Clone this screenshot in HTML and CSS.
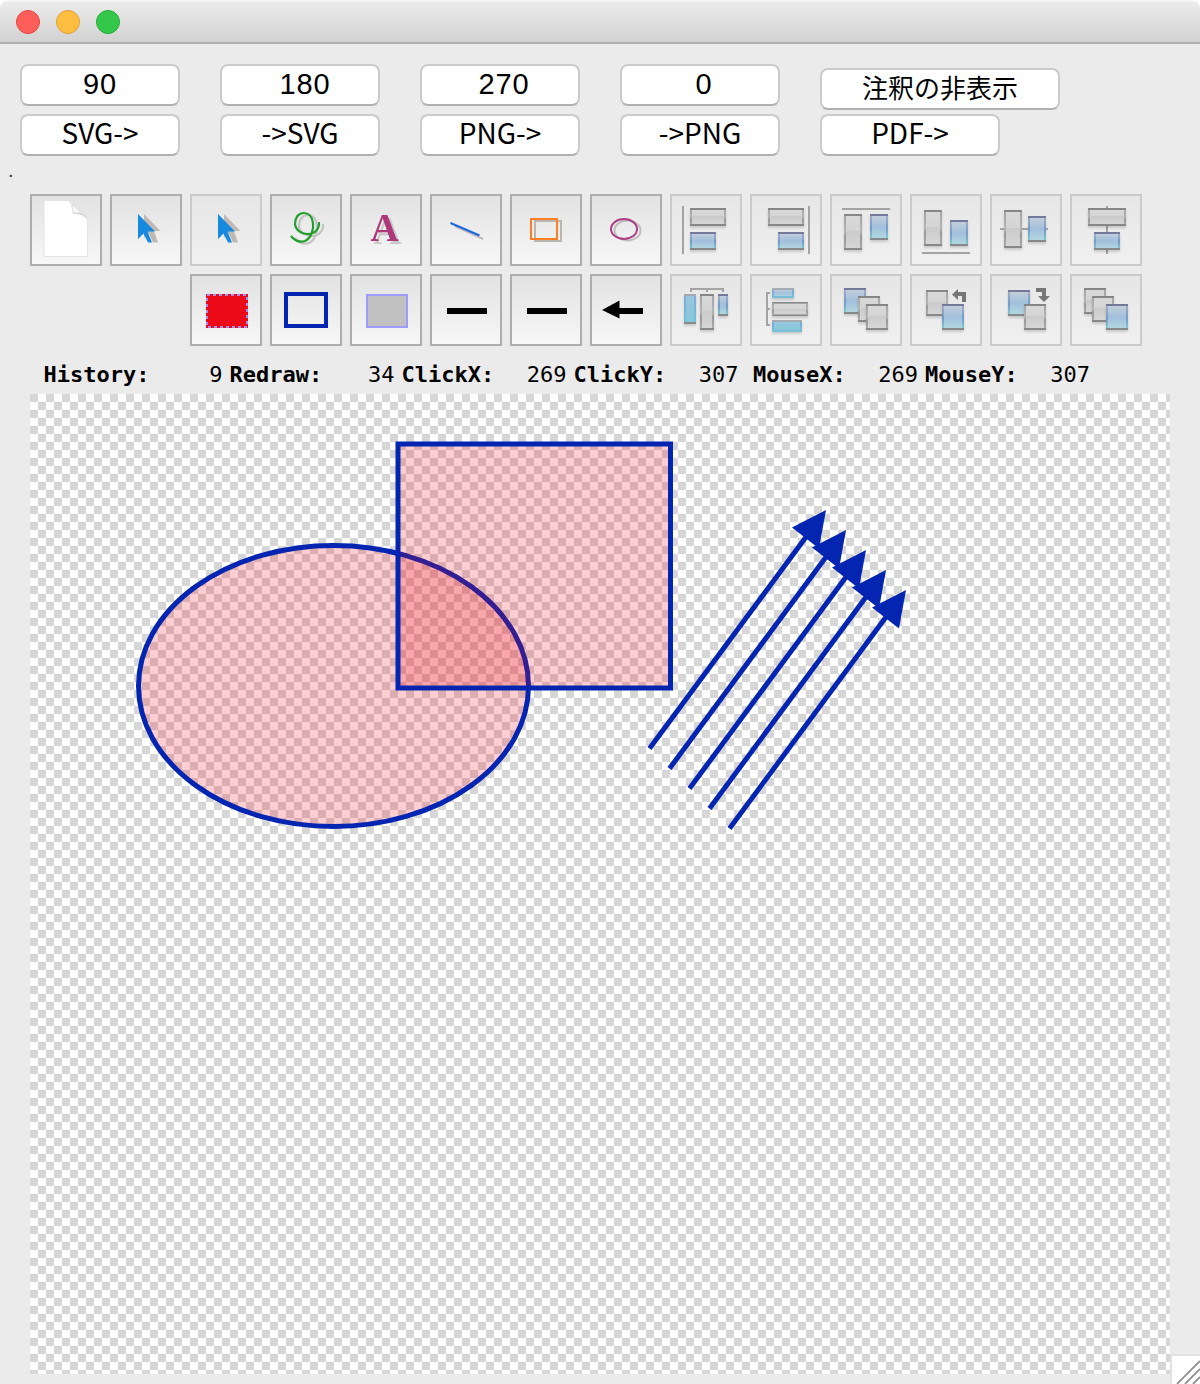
FILE: index.html
```html
<!DOCTYPE html>
<html lang="ja">
<head>
<meta charset="utf-8">
<title>SVG</title>
<link rel="stylesheet" href="styles.css">
</head>
<body>
<svg class="defs" width="0" height="0" aria-hidden="true">
  <defs>
    <linearGradient id="gf" x1="0" y1="0" x2="0" y2="1"><stop offset="0" stop-color="#d9d9d9"/><stop offset=".46" stop-color="#d4d4d4"/><stop offset=".46" stop-color="#cacaca"/><stop offset="1" stop-color="#d7d7d7"/></linearGradient>
    <linearGradient id="gs" x1="0" y1="0" x2="0" y2="1"><stop offset=".035" stop-color="#868686"/><stop offset=".035" stop-color="#a6a6a6"/><stop offset=".5" stop-color="#b4b4b4"/><stop offset=".65" stop-color="#989898"/><stop offset=".96" stop-color="#aaa"/><stop offset=".96" stop-color="#888"/></linearGradient>
    <linearGradient id="bf" x1="0" y1="0" x2="0" y2="1"><stop offset="0" stop-color="#c7cfdc"/><stop offset=".5" stop-color="#a0bfdc"/><stop offset="1" stop-color="#b4d9e0"/></linearGradient>
    <linearGradient id="bs" x1="0" y1="0" x2="0" y2="1"><stop offset=".05" stop-color="#74799a"/><stop offset=".05" stop-color="#a2adc4"/><stop offset=".55" stop-color="#739bc9"/><stop offset=".94" stop-color="#80c5cf"/><stop offset=".94" stop-color="#858989"/></linearGradient>
    <linearGradient id="cf" x1="0" y1="0" x2="0" y2="1"><stop offset="0" stop-color="#9bc7df"/><stop offset="1" stop-color="#83c7d9"/></linearGradient>
    <linearGradient id="cs" x1="0" y1="0" x2="0" y2="1"><stop offset=".05" stop-color="#a3a9ad"/><stop offset=".05" stop-color="#7aaeda"/><stop offset=".96" stop-color="#70c0d8"/><stop offset=".96" stop-color="#868a8b"/></linearGradient>
    <linearGradient id="ss" x1="0" y1="0" x2="0" y2="1"><stop offset=".1" stop-color="#a3abb0"/><stop offset=".1" stop-color="#7fa9d4"/><stop offset="1" stop-color="#77bfd9"/></linearGradient>
  </defs>
</svg>
<div class="window">
  <header class="titlebar"><i class="light red"></i><i class="light yellow"></i><i class="light green"></i></header>

  <div class="commands">
    <div class="cmd num">90</div><div class="cmd num push-10">180</div><div class="cmd num push-8">270</div><div class="cmd num push-8">0</div><div class="cmd wide">注釈の非表示</div>
    <div class="cmd">SVG-&gt;</div><div class="cmd">-&gt;SVG</div><div class="cmd">PNG-&gt;</div><div class="cmd">-&gt;PNG</div><div class="cmd medium">PDF-&gt;</div>
  </div>
  <div class="dot">.</div>

  <div class="tools">
    <div class="tool"><svg viewBox="2 2 68 68"><path d="M14 6.500H37C43 7 41 12 43 19C49 20 57 21 57.500 27V62.500H14z" fill="#fff" stroke="#e4e4e4"/><path d="M38 7C44 7 50 14 57 24C52 19 47 20 43 19C42 14 43 10 38 7z" fill="#e4e4e4"/><path d="M43 12l6 6-5 1z" fill="#fff"/><path d="M43 19C49 19 54 20 57 24" fill="none" stroke="#d0d0d0"/></svg></div>
    <div class="tool"><svg viewBox="2 2 68 68"><path class="cshadow" d="M34 20L50.500 37H44L48 48.500H43L38.500 39L34 44z"/><path class="cursor" d="M28 20L45 37.500H37.500L42 48.500H38L33.500 39.500L28 45z"/></svg></div>
    <div class="tool off"><svg viewBox="2 2 68 68"><path class="cshadow" d="M34 20L50.500 37H44L48 48.500H43L38.500 39L34 44z"/><path class="cursor" d="M28 20L45 37.500H37.500L42 48.500H38L33.500 39.500L28 45z"/></svg></div>
    <div class="tool"><svg viewBox="2 2 68 68" fill="none" stroke-width="2.200"><path transform="translate(4 2)" stroke="#c3c3c3" d="M21 42C25 47 30 48.500 35 47C41 44 44 36 43 29C42 22 38 19 34 19C28 19 25 24 25 30C26 37 32 40 38 40C45 40 49.500 35 49 28"/><path stroke="#20a02a" d="M21 42C25 47 30 48.500 35 47C41 44 44 36 43 29C42 22 38 19 34 19C28 19 25 24 25 30C26 37 32 40 38 40C45 40 49.500 35 49 28"/></svg></div>
    <div class="tool"><svg viewBox="2 2 68 68"><text class="letter" x="34.500" y="46.500">A</text></svg></div>
    <div class="tool"><svg viewBox="2 2 68 68" stroke-width="2.200"><path stroke="#c3bdb9" d="M25 32L53 45"/><path stroke="#1d68de" d="M20.500 29L49.500 41.500"/></svg></div>
    <div class="tool"><svg viewBox="2 2 68 68" fill="none" stroke-width="2"><rect x="25" y="27" width="26" height="20" stroke="#b9b5b1"/><rect x="21" y="25" width="26" height="20" stroke="#ff7f27"/></svg></div>
    <div class="tool"><svg viewBox="2 2 68 68" fill="none" stroke-width="2"><ellipse cx="37.500" cy="36.500" rx="13" ry="10" stroke="#c0bdbd"/><ellipse cx="34" cy="35" rx="13" ry="10" stroke="#ac3f83"/></svg></div>
    <div class="tool off"><svg viewBox="2 2 68 68"><path class="guide" d="M13 12V60"/><rect class="g" x="21" y="15" width="34" height="16"/><rect class="b" x="21" y="39" width="24" height="16"/></svg></div>
    <div class="tool off"><svg viewBox="2 2 68 68"><path class="guide" d="M59 12V60"/><rect class="g" x="19" y="15" width="34" height="16"/><rect class="b" x="29" y="39" width="24" height="16"/></svg></div>
    <div class="tool off"><svg viewBox="2 2 68 68"><path class="guide" d="M12 15H60"/><rect class="g" x="15" y="21" width="16" height="34"/><rect class="b" x="41" y="21" width="16" height="24"/></svg></div>
    <div class="tool off"><svg viewBox="2 2 68 68"><path class="guide" d="M12 59H60"/><rect class="g" x="15" y="17" width="16" height="34"/><rect class="b" x="41" y="27" width="16" height="24"/></svg></div>
    <div class="tool off"><svg viewBox="2 2 68 68"><path class="guide" d="M10 35H58"/><rect class="g" x="15" y="17" width="16" height="36"/><rect class="b" x="39" y="23" width="16" height="24"/></svg></div>
    <div class="tool off"><svg viewBox="2 2 68 68"><path class="guide" d="M37 12V60"/><rect class="g" x="19" y="15" width="36" height="16"/><rect class="b" x="25" y="39" width="24" height="16"/></svg></div>

    <div class="tool third"><svg viewBox="2 2 68 68"><rect x="16" y="20" width="42" height="34" fill="#ed0a18"/><rect x="17" y="21" width="40" height="32" fill="none" stroke="#9c90f4" stroke-width="2" stroke-dasharray="3 3"/></svg></div>
    <div class="tool"><svg viewBox="2 2 68 68"><rect x="16" y="20" width="40" height="32" fill="none" stroke="#0425b2" stroke-width="4"/></svg></div>
    <div class="tool"><svg viewBox="2 2 68 68"><rect x="17" y="21" width="40" height="32" fill="#c1c1c1" stroke="#9c9cff" stroke-width="2"/></svg></div>
    <div class="tool"><svg viewBox="2 2 68 68"><path d="M17 37H57" stroke="#000" stroke-width="6"/></svg></div>
    <div class="tool"><svg viewBox="2 2 68 68"><path d="M17 37H57" stroke="#000" stroke-width="6"/></svg></div>
    <div class="tool"><svg viewBox="2 2 68 68"><path d="M12 36L29.500 26.500V34H53V40H29.500V44.500z"/></svg></div>
    <div class="tool off"><svg viewBox="2 2 68 68"><path class="guide" d="M21 18V15H53V18M37 15V18"/><rect class="c" x="15" y="21" width="10" height="28"/><rect class="g" x="31" y="21" width="12" height="34"/><rect class="b" x="49" y="21" width="8" height="20"/></svg></div>
    <div class="tool off"><svg viewBox="2 2 68 68"><path class="guide" d="M20 19H17V51H20M17 35H20"/><rect class="b small" x="23" y="15" width="20" height="8"/><rect class="g" x="23" y="29" width="34" height="12"/><rect class="c small" x="23" y="47" width="28" height="10"/></svg></div>
    <div class="tool off"><svg viewBox="2 2 68 68"><rect class="b" x="15" y="15" width="20" height="24"/><rect class="g" x="29" y="23" width="20" height="24"/><rect class="g" x="37" y="31" width="20" height="24"/></svg></div>
    <div class="tool off"><svg viewBox="2 2 68 68"><rect class="g" x="17" y="17" width="20" height="24"/><rect class="b" x="33" y="31" width="20" height="24"/><path d="M42 20.500L48 15V18H56V28H52V22H48V26z" fill="#777"/></svg></div>
    <div class="tool off"><svg viewBox="2 2 68 68"><rect class="b" x="19" y="17" width="20" height="24"/><rect class="g" x="35" y="31" width="20" height="24"/><path d="M46 14H56V22H60L54 28L48 22H52V18H46z" fill="#777"/></svg></div>
    <div class="tool off"><svg viewBox="2 2 68 68"><rect class="g" x="15" y="15" width="20" height="24"/><rect class="g" x="23" y="23" width="20" height="24"/><rect class="b" x="37" y="31" width="20" height="24"/></svg></div>
  </div>

  <div class="status">
    <div class="stat first"><b>History:</b><span>9</span></div>
    <div class="stat"><b>Redraw:</b><span>34</span></div>
    <div class="stat"><b>ClickX:</b><span>269</span></div>
    <div class="stat"><b>ClickY:</b><span>307</span></div>
    <div class="stat mouse"><b>MouseX:</b><span>269</span></div>
    <div class="stat"><b>MouseY:</b><span>307</span></div>
  </div>

  <main class="canvas">
    <svg class="drawing" viewBox="30 394 1140 980">
      <g class="shape"><ellipse cx="333.500" cy="686" rx="195" ry="140.500"/><rect x="398" y="444" width="272.500" height="244"/></g>
      <defs><g id="arrow"><path class="shaft" d="M649.500 748.500L806 537"/><path class="head" d="M826 510L792 527.500L819 548.500z"/></g></defs>
      <use href="#arrow"/><use href="#arrow" x="20" y="20"/><use href="#arrow" x="40" y="40"/><use href="#arrow" x="60" y="60"/><use href="#arrow" x="80" y="80"/>
    </svg>
  </main>
  <svg class="grip" viewBox="0 0 28 28"><path d="M5 28L28 5M13 28L28 13M21 28L28 21" stroke="#939393" stroke-width="1.800"/></svg>
</div>
</body>
</html>
```
FILE: styles.css
```css
* { box-sizing: border-box; }
body { margin: 0; background: #fff; color: #000; }
.defs { position: absolute; }
.window {
  position: relative;
  width: 1200px;
  height: 1384px;
  overflow: hidden;
  background: #ebebeb;
  border-radius: 9px 9px 0 0;
}
.titlebar {
  display: flex;
  gap: 16px;
  height: 44px;
  padding: 8px 16px 0;
  border-top: 2px solid #f5f5f5;
  border-bottom: 2px solid #b1b1b1;
  background: linear-gradient(#ebebeb, #d2d2d2);
}
.light { width: 24px; height: 24px; border-radius: 50%; border: 1.5px solid; }
.red { background: #ff5f5b; border-color: #e2463f; }
.yellow { background: #ffbe40; border-color: #df9f35; }
.green { background: #34c84a; border-color: #27aa35; }

.commands {
  display: grid;
  grid-template-columns: repeat(4, 160px) 240px;
  grid-template-rows: 42px 42px;
  gap: 8px 40px;
  padding: 20px 20px 0;
}
.cmd {
  height: 42px;
  border: 2px solid #cbcbcb;
  border-bottom-color: #b1b1b1;
  border-radius: 8px;
  background: #fff;
  font: 28px/33px "Noto Sans CJK JP", sans-serif;
  text-align: center;
  white-space: nowrap;
}
.num { font: 29px/36px "Liberation Sans", sans-serif; letter-spacing: .8px; }
.push-10 { padding-left: 10px; }
.push-8 { padding-left: 8px; }
.wide { margin-top: 4px; font-size: 26px; line-height: 34px; }
.medium { width: 180px; }
.dot { height: 38px; padding: 4px 0 0 8px; font: 20px/20px "Liberation Sans", sans-serif; color: #333; }

.tools {
  display: grid;
  grid-template-columns: repeat(14, 72px);
  gap: 8px;
  padding-left: 30px;
}
.tool {
  height: 72px;
  border: 2px solid #adadad;
  background: linear-gradient(#e2e2e2, #f7f7f7);
}
.tool svg { display: block; width: 68px; height: 68px; }
.off { border-color: #cacaca; background: linear-gradient(#e6e6e6, #f0f0f0); }
.third { grid-column-start: 3; }
.cursor { fill: #1789df; }
.cshadow { fill: #c0b9b3; }
.letter {
  font: bold 39px "Liberation Serif", serif;
  text-anchor: middle;
  fill: #ac3779;
  filter: drop-shadow(3px 3px 0 #c9c7c8);
}
.guide { fill: none; stroke: #a3a3a3; stroke-width: 2; }
.g, .b, .c { stroke-width: 2; filter: drop-shadow(0 2px 1px rgba(0, 0, 0, .15)); }
.g { fill: url(#gf); stroke: url(#gs); }
.b { fill: url(#bf); stroke: url(#bs); }
.c { fill: url(#cf); stroke: url(#cs); }
.small { stroke: url(#ss); }

.status {
  display: flex;
  gap: 7px;
  height: 48px;
  padding: 15px 0 0 43.5px;
  font: 22px/28px "DejaVu Sans Mono", monospace;
}
.stat { display: flex; justify-content: space-between; width: 165px; }
.first { width: 179px; }
.mouse { margin-left: 7.5px; }

.canvas {
  width: 1140px;
  height: 980px;
  margin-left: 30px;
  background: repeating-conic-gradient(#fff 0 25%, #d6d6d6 0 50%) 0 0 / 16px 16px;
}
.drawing { display: block; width: 1140px; height: 980px; }
.shape { fill: rgba(240, 10, 25, .2); stroke: #0425b2; stroke-width: 5; }
.shaft { stroke: #0425b2; stroke-width: 5; }
.head { fill: #0425b2; }
.grip {
  position: absolute;
  right: 0;
  bottom: 0;
  width: 30px;
  height: 30px;
  border-left: 2px solid #e2e2e2;
  border-top: 2px solid #e2e2e2;
  background: #fff;
}
```
